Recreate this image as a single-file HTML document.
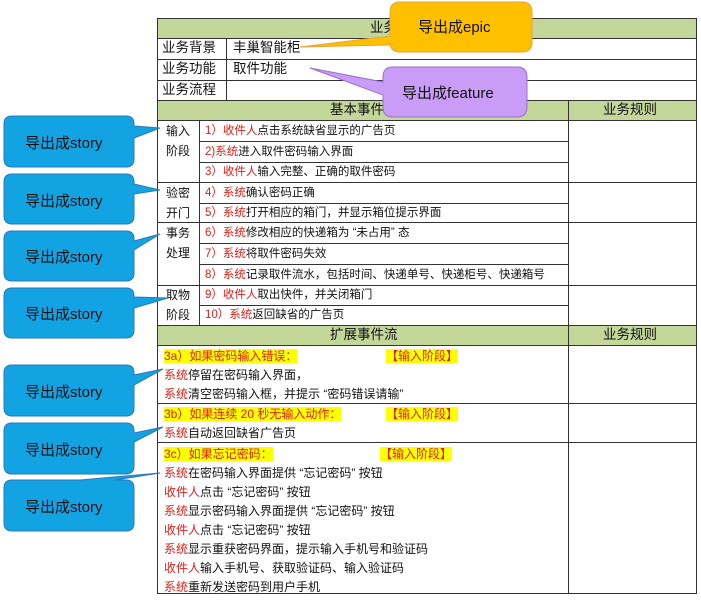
<!DOCTYPE html>
<html><head><meta charset="utf-8"><style>
*{margin:0;padding:0;box-sizing:border-box}
body{width:701px;height:600px;background:#fff;position:relative;overflow:hidden;font-family:"Liberation Sans","Noto Sans CJK SC",sans-serif;color:#111}
.g{position:absolute;background:#c4d79b}
.h{position:absolute;height:1px;background:#333}
.v{position:absolute;width:1px;background:#333}
.t{position:absolute;font-size:12px;line-height:20px;white-space:nowrap}
.b{font-size:11.5px}
.t13{position:absolute;font-size:13.5px;line-height:20px;white-space:nowrap}
.r{color:#e0201a}
.y{background:#ffff00;color:#e0201a}
.c{position:absolute;font-size:15px;white-space:nowrap;color:#111}
</style></head><body>
<div class="g" style="left:157px;top:18px;width:540px;height:20px"></div>
<div class="g" style="left:157px;top:100px;width:540px;height:20px"></div>
<div class="g" style="left:157px;top:325px;width:540px;height:20px"></div>
<div class="v" style="left:157px;top:18px;height:576px"></div>
<div class="v" style="left:696px;top:18px;height:576px"></div>
<div class="h" style="left:157px;top:18px;width:540px"></div>
<div class="h" style="left:157px;top:593px;width:540px"></div>
<div class="h" style="left:157px;top:38px;width:540px"></div>
<div class="h" style="left:157px;top:59px;width:540px"></div>
<div class="h" style="left:157px;top:80px;width:540px"></div>
<div class="h" style="left:157px;top:100px;width:540px"></div>
<div class="v" style="left:226px;top:38px;height:62px"></div>
<div class="t13" style="left:162px;top:38px">业务背景</div>
<div class="t13" style="left:233px;top:38px">丰巢智能柜</div>
<div class="t13" style="left:162px;top:59px">业务功能</div>
<div class="t13" style="left:233px;top:59px">取件功能</div>
<div class="t13" style="left:162px;top:80px">业务流程</div>
<div class="t13" style="left:370px;top:18px">业务</div>
<div class="t13" style="left:330px;top:100px">基本事件流</div>
<div class="t13" style="left:603px;top:100px">业务规则</div>
<div class="v" style="left:568px;top:100px;height:225px"></div>
<div class="h" style="left:157px;top:120px;width:540px"></div>
<div class="v" style="left:199px;top:120px;height:205px"></div>
<div class="h" style="left:199px;top:141px;width:370px"></div>
<div class="h" style="left:199px;top:162px;width:370px"></div>
<div class="h" style="left:157px;top:182px;width:540px"></div>
<div class="h" style="left:199px;top:203px;width:370px"></div>
<div class="h" style="left:157px;top:222px;width:540px"></div>
<div class="h" style="left:199px;top:243px;width:370px"></div>
<div class="h" style="left:199px;top:264px;width:370px"></div>
<div class="h" style="left:157px;top:285px;width:540px"></div>
<div class="h" style="left:199px;top:305px;width:370px"></div>
<div class="h" style="left:157px;top:325px;width:540px"></div>
<div class="t" style="left:166px;top:121px">输入<br>阶段</div>
<div class="t" style="left:166px;top:183px">验密<br>开门</div>
<div class="t" style="left:166px;top:223px">事务<br>处理</div>
<div class="t" style="left:166px;top:285px">取物<br>阶段</div>
<div class="t b" style="left:205px;top:121px"><span class="r">1）收件人</span>点击系统缺省显示的广告页</div>
<div class="t b" style="left:205px;top:142px"><span class="r">2)系统</span>进入取件密码输入界面</div>
<div class="t b" style="left:205px;top:162px"><span class="r">3）收件人</span>输入完整、正确的取件密码</div>
<div class="t b" style="left:205px;top:183px"><span class="r">4）系统</span>确认密码正确</div>
<div class="t b" style="left:205px;top:203px"><span class="r">5）系统</span>打开相应的箱门，并显示箱位提示界面</div>
<div class="t b" style="left:205px;top:223px"><span class="r">6）系统</span>修改相应的快递箱为 “未占用” 态</div>
<div class="t b" style="left:205px;top:244px"><span class="r">7）系统</span>将取件密码失效</div>
<div class="t b" style="left:205px;top:265px"><span class="r">8）系统</span>记录取件流水，包括时间、快递单号、快递柜号、快递箱号</div>
<div class="t b" style="left:205px;top:285px"><span class="r">9）收件人</span>取出快件，并关闭箱门</div>
<div class="t b" style="left:205px;top:305px"><span class="r">10）系统</span>返回缺省的广告页</div>
<div class="t13" style="left:330px;top:325px">扩展事件流</div>
<div class="t13" style="left:603px;top:325px">业务规则</div>
<div class="v" style="left:568px;top:325px;height:268px"></div>
<div class="h" style="left:157px;top:345px;width:540px"></div>
<div class="h" style="left:157px;top:403px;width:540px"></div>
<div class="h" style="left:157px;top:442px;width:540px"></div>
<div class="t" style="left:164px;top:346px"><span class="y">3a）如果密码输入错误：</span></div>
<div class="t" style="left:386px;top:346px"><span class="y">【输入阶段】</span></div>
<div class="t" style="left:164px;top:365px"><span class="r">系统</span>停留在密码输入界面，</div>
<div class="t" style="left:164px;top:384px"><span class="r">系统</span>清空密码输入框，并提示 “密码错误请输”</div>
<div class="t" style="left:164px;top:404px"><span class="y">3b）如果连续 20 秒无输入动作：</span></div>
<div class="t" style="left:386px;top:404px"><span class="y">【输入阶段】</span></div>
<div class="t" style="left:164px;top:423px"><span class="r">系统</span>自动返回缺省广告页</div>
<div class="t" style="left:164px;top:444px"><span class="y">3c）如果忘记密码：</span></div>
<div class="t" style="left:380px;top:444px"><span class="y">【输入阶段】</span></div>
<div class="t" style="left:164px;top:463px"><span class="r">系统</span>在密码输入界面提供 “忘记密码” 按钮</div>
<div class="t" style="left:164px;top:482px"><span class="r">收件人</span>点击 “忘记密码” 按钮</div>
<div class="t" style="left:164px;top:501px"><span class="r">系统</span>显示密码输入界面提供 “忘记密码” 按钮</div>
<div class="t" style="left:164px;top:520px"><span class="r">收件人</span>点击 “忘记密码” 按钮</div>
<div class="t" style="left:164px;top:539px"><span class="r">系统</span>显示重获密码界面，提示输入手机号和验证码</div>
<div class="t" style="left:164px;top:558px"><span class="r">收件人</span>输入手机号、获取验证码、输入验证码</div>
<div class="t" style="left:164px;top:577px"><span class="r">系统</span>重新发送密码到用户手机</div>
<svg width="701" height="600" style="position:absolute;left:0;top:0">
<g fill="#12a3e3" stroke="#2b79b8" stroke-width="1">
<path d="M12,116 H126 Q134,116 134,124 V126 L160,128 L134,138 V159 Q134,167 126,167 H12 Q4,167 4,159 V124 Q4,116 12,116 Z"/>
<path d="M12,174 H126 Q134,174 134,182 V184 L160,190 L134,194 V216 Q134,224 126,224 H12 Q4,224 4,216 V182 Q4,174 12,174 Z"/>
<path d="M12,231 H126 Q134,231 134,239 V241 L160,234 L134,250 V273 Q134,281 126,281 H12 Q4,281 4,273 V239 Q4,231 12,231 Z"/>
<path d="M12,288 H126 Q134,288 134,296 V297 L168,298 L134,308 V330 Q134,338 126,338 H12 Q4,338 4,330 V296 Q4,288 12,288 Z"/>
<path d="M12,365 H126 Q134,365 134,373 V375 L163,369 L134,385 V408 Q134,416 126,416 H12 Q4,416 4,408 V373 Q4,365 12,365 Z"/>
<path d="M12,423 H126 Q134,423 134,431 V433 L163,427 L134,442 V466 Q134,474 126,474 H12 Q4,474 4,466 V431 Q4,423 12,423 Z"/>
<path d="M12,480 H80 L160,473 L115,480 H126 Q134,480 134,488 V523 Q134,531 126,531 H12 Q4,531 4,523 V488 Q4,480 12,480 Z"/>
</g>
<path d="M400,2 H522 Q532,2 532,12 V42 Q532,52 522,52 H400 Q390,52 390,42 V45 L300,47 L390,36 V12 Q390,2 400,2 Z" fill="#ffc000" stroke="#e8a33a"/>
<path d="M393,67 H517 Q527,67 527,77 V107 Q527,117 517,117 H393 Q383,117 383,107 V95 L310,68 L383,82 V77 Q383,67 393,67 Z" fill="#c99cf7" stroke="#9a70c8"/>
</svg>
<div class="c" style="left:418px;top:16px">导出成epic</div>
<div class="c" style="left:402px;top:82px">导出成feature</div>
<div class="c" style="left:25px;top:132px">导出成story</div>
<div class="c" style="left:25px;top:190px">导出成story</div>
<div class="c" style="left:25px;top:246px">导出成story</div>
<div class="c" style="left:25px;top:303px">导出成story</div>
<div class="c" style="left:25px;top:381px">导出成story</div>
<div class="c" style="left:25px;top:439px">导出成story</div>
<div class="c" style="left:25px;top:496px">导出成story</div>
</body></html>
